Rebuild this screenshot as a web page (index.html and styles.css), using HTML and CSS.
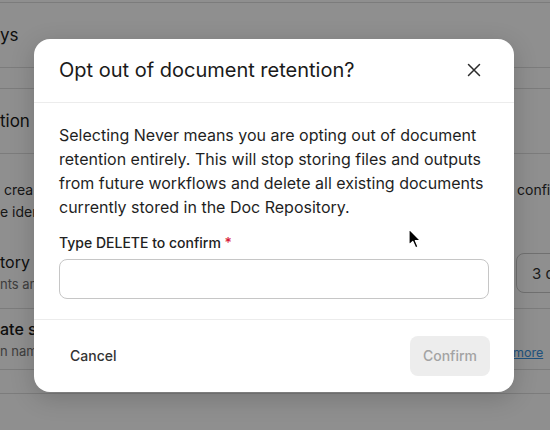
FILE: index.html
```html
<!DOCTYPE html>
<html lang="en">
<head>
<meta charset="utf-8">
<title>Opt out of document retention</title>
<link rel="stylesheet" href="styles.css">
</head>
<body>
<div class="page">
  <div class="bg">
    <div class="bg-top"><span class="h18">ys</span></div>
    <div class="bg-gap"></div>
    <div class="bg-sec"><span class="h18">tion</span></div>
    <div class="bg-row1">
      <div class="desc">
        <div class="desc-left">&nbsp;crea<br>e iden</div>
        <div class="desc-right">confi</div>
      </div>
      <div class="item">
        <div class="item-left">
          <div class="item-title">tory</div>
          <div class="item-sub">nts and</div>
        </div>
        <div class="item-right"><div class="select">3 da</div></div>
      </div>
    </div>
    <div class="bg-row2">
      <div class="item-left">
        <div class="item-title strong">ate se</div>
        <div class="item-sub">n name</div>
      </div>
      <div class="item-right"><a class="more" href="#">more</a></div>
    </div>
    <div class="bg-row3"></div>
  </div>

  <div class="overlay">
    <div class="modal" role="dialog" aria-labelledby="mtitle">
      <div class="modal-header">
        <h2 id="mtitle" class="modal-title">Opt out of document retention?</h2>
        <button class="close" aria-label="Close">
          <svg width="16" height="16" viewBox="0 0 16 16"><path d="M2.5 2.5 L13.5 13.5 M13.5 2.5 L2.5 13.5" stroke="#2b2b2b" stroke-width="1.5" stroke-linecap="round" fill="none"/></svg>
        </button>
      </div>
      <div class="modal-body">
        <p class="msg">Selecting Never means you are opting out of document retention entirely. This will stop storing files and outputs from future workflows and delete all existing documents currently stored in the Doc Repository.</p>
        <label class="label" for="confirmInput">Type DELETE to confirm <span class="req">*</span></label>
        <input id="confirmInput" class="input" type="text">
      </div>
      <div class="modal-footer">
        <button class="btn-cancel">Cancel</button>
        <button class="btn-confirm" disabled>Confirm</button>
      </div>
    </div>
  </div>

  <svg class="cursor" width="14" height="22" viewBox="0 0 14 22"><path d="M1 1 L1 17 L4.8 13.4 L7.6 19.8 L10 18.8 L7.3 12.5 L12.4 12.5 Z" fill="#000" stroke="#fff" stroke-width="1.2" stroke-linejoin="round"/></svg>
</div>
</body>
</html>
```

FILE: styles.css
```css
* { box-sizing: border-box; }
html, body { margin: 0; padding: 0; }
body {
  width: 550px;
  height: 430px;
  overflow: hidden;
  font-family: Inter, "Noto Sans", "Liberation Sans", sans-serif;
  color: #1a1a1a;
  background: #ffffff;
}
.page { position: relative; width: 550px; height: 430px; overflow: hidden; }

/* background page */
.bg { padding-top: 2px; }
.bg-top, .bg-gap, .bg-sec, .bg-row1, .bg-row2, .bg-row3 { border-top: 1px solid #dedede; }
.bg-top { height: 65px; display: flex; align-items: center; }
.bg-gap { height: 21px; }
.bg-sec { height: 65px; display: flex; align-items: center; }
.h18 { font-size: 17px; line-height: 24px; color: #1a1a1a; }
.bg-row1 { height: 155px; padding-top: 25px; }
.desc { display: flex; justify-content: space-between; font-size: 14px; line-height: 22px; color: #2a2a2a; }
.desc-right { width: 34px; white-space: nowrap; padding-left: 1px; overflow: hidden; }
.item { display: flex; justify-content: space-between; margin-top: 27px; }
.item-left { display: flex; flex-direction: column; }
.item-title { font-size: 16px; line-height: 24px; color: #1a1a1a; }
.item-title.strong { font-weight: 500; }
.item-sub { font-size: 13px; line-height: 20px; color: #6f6f6f; }
.item-right { width: 34px; white-space: nowrap; }
.select {
  margin-top: 3px;
  height: 40px;
  width: 80px;
  border: 1px solid #c8c8c8;
  border-radius: 8px;
  padding-left: 15px;
  display: flex;
  align-items: center;
  font-size: 15px;
  color: #333;
}
.bg-row2 { height: 61px; display: flex; justify-content: space-between; padding-top: 8px; }
.bg-row2 .item-right { display: flex; align-items: flex-end; padding-bottom: 9px; margin-left: -3px; width: 37px; }
.more { font-size: 12.5px; color: #3a92e0; text-decoration: underline; }
.bg-row3 { height: 25px; border-bottom: 1px solid #dedede; }

/* overlay + modal */
.overlay {
  position: absolute;
  inset: 0;
  padding-right: 2px;
  background: rgba(0, 0, 0, 0.44);
  display: flex;
  align-items: center;
  justify-content: center;
}
.modal {
  width: 480px;
  background: #ffffff;
  border-radius: 16px;
  box-shadow: 0 6px 24px rgba(0, 0, 0, 0.18);
  display: flex;
  flex-direction: column;
}
.modal-header {
  height: 64px;
  padding: 0 24px 0 25px;
  display: flex;
  align-items: center;
  justify-content: space-between;
  border-bottom: 1px solid #ececec;
}
.modal-title { margin: 0; font-size: 20px; font-weight: 400; line-height: 26px; color: #1a1a1a; }
.close {
  width: 32px; height: 32px;
  border: 0; background: transparent; padding: 0;
  display: flex; align-items: center; justify-content: center;
}
.modal-body { padding: 20px 25px 20px 25px; display: flex; flex-direction: column; }
.msg { margin: 0; font-size: 16px; line-height: 24px; color: #1f1f1f; }
.label { margin-top: 14px; margin-bottom: 6px; font-size: 14px; line-height: 20px; font-weight: 500; color: #222; }
.req { color: #d81b3b; }
.input {
  height: 40px;
  width: 100%;
  border: 1px solid #c6c6c6;
  border-radius: 8px;
  background: #fff;
  font-family: inherit;
  font-size: 14px;
  padding: 0 12px;
}
.modal-footer {
  border-top: 1px solid #ececec;
  padding: 16px 24px 16px 24px;
  display: flex;
  justify-content: space-between;
  align-items: center;
}
.btn-cancel, .btn-confirm {
  height: 40px;
  border: 0;
  border-radius: 8px;
  font-family: inherit;
  font-size: 14px;
  font-weight: 500;
}
.btn-cancel { background: transparent; color: #333; padding: 0 12px; }
.btn-confirm { background: #ededed; color: #a3a3a3; width: 80px; padding: 0; }

.cursor { position: absolute; left: 408px; top: 228px; }
```
